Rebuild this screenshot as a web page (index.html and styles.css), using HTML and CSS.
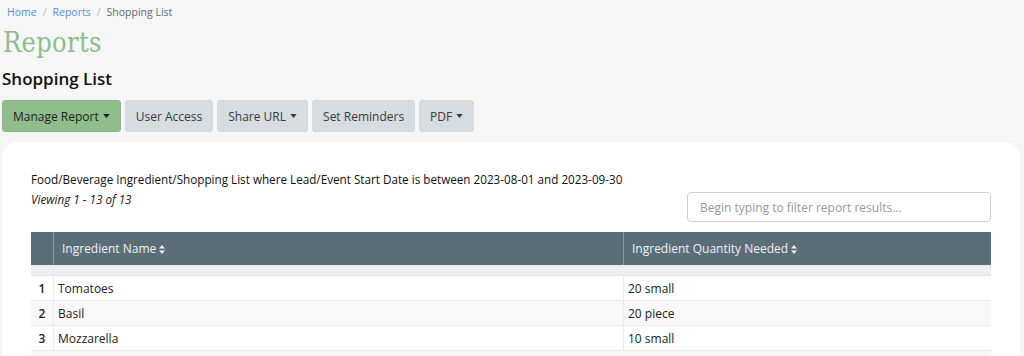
FILE: index.html
```html
<!DOCTYPE html>
<html>
<head>
<meta charset="utf-8">
<link rel="stylesheet" href="styles.css">
</head>
<body>
<nav class="crumbs">
  <a href="#">Home</a><span class="sep">/</span><a href="#">Reports</a><span class="sep">/</span><span class="cur">Shopping List</span>
</nav>
<h1 class="title">Reports</h1>
<h2 class="subtitle">Shopping List</h2>
<div class="toolbar">
  <button class="btn btn-green">Manage Report <svg class="caret" viewBox="0 0 8 5"><path d="M0 0h8L4 5z"/></svg></button>
  <button class="btn">User Access</button>
  <button class="btn">Share URL <svg class="caret" viewBox="0 0 8 5"><path d="M0 0h8L4 5z"/></svg></button>
  <button class="btn">Set Reminders</button>
  <button class="btn">PDF <svg class="caret" viewBox="0 0 8 5"><path d="M0 0h8L4 5z"/></svg></button>
</div>
<section class="card">
  <div class="card-top">
    <div class="desc">
      <div class="desc-title">Food/Beverage Ingredient/Shopping List where Lead/Event Start Date is between 2023-08-01 and 2023-09-30</div>
      <div class="desc-count">Viewing 1 - 13 of 13</div>
    </div>
    <input class="filter" type="text" placeholder="Begin typing to filter report results...">
  </div>
  <table class="report">
    <thead>
      <tr>
        <th class="num"></th>
        <th class="c-name">Ingredient Name <svg class="sort" viewBox="0 0 6 9"><path d="M0 3.6L3 0l3 3.6zM0 5.4h6L3 9z"/></svg></th>
        <th>Ingredient Quantity Needed <svg class="sort" viewBox="0 0 6 9"><path d="M0 3.6L3 0l3 3.6zM0 5.4h6L3 9z"/></svg></th>
      </tr>
    </thead>
    <tbody>
      <tr class="band"><td></td><td></td><td></td></tr>
      <tr><td class="num">1</td><td>Tomatoes</td><td>20 small</td></tr>
      <tr class="alt"><td class="num">2</td><td>Basil</td><td>20 piece</td></tr>
      <tr><td class="num">3</td><td>Mozzarella</td><td>10 small</td></tr>
    </tbody>
  </table>
  <div class="more-row"></div>
</section>
</body>
</html>
```
FILE: styles.css
```css
html, body {
  margin: 0;
  padding: 0;
  background: #f6f6f6;
  overflow: hidden;
}
body {
  font-family: "Open Sans", "Noto Sans", sans-serif;
  color: #222;
  padding: 0 4px 0 2px;
}
.crumbs {
  font-size: 10.5px;
  line-height: 15px;
  padding: 5px 0 0 5px;
  color: #666;
}
.crumbs a {
  color: #5b8fd6;
  text-decoration: none;
}
.crumbs .sep {
  color: #bbb;
  padding: 0 6px;
}
.title {
  font-family: "DejaVu Serif", serif;
  font-stretch: condensed;
  font-weight: normal;
  font-size: 27px;
  line-height: 34px;
  color: #8fbc8c;
  margin: 6px 0 0 1px;
  letter-spacing: 0.3px;
}
.subtitle {
  font-size: 17px;
  font-weight: 600;
  line-height: 24px;
  margin: 7px 0 0 0;
  color: #111;
}
.toolbar {
  display: flex;
  gap: 4px;
  margin-top: 9px;
}
.btn {
  font-family: "Open Sans", sans-serif;
  font-size: 12px;
  font-weight: 500;
  height: 32px;
  padding: 0 10px;
  border: 1px solid #d3d9dd;
  background: #d6dce0;
  color: #3a3a3a;
  border-radius: 3px;
  display: flex;
  align-items: center;
  gap: 4px;
}
.btn-green {
  background: #8fbd8c;
  border-color: #89b886;
  color: #1e1e1e;
}
.caret {
  width: 7px;
  height: 4px;
  fill: currentColor;
}
.card {
  margin-top: 10px;
  background: #fff;
  border-radius: 15px 15px 0 0;
  padding: 27px 29px 0 29px;
  height: 300px;
}
.card-top {
  display: flex;
  justify-content: space-between;
  align-items: flex-end;
}
.desc-title {
  font-size: 11.7px;
  font-weight: 500;
  line-height: 20px;
  color: #111;
}
.desc-count {
  font-size: 11.7px;
  font-style: italic;
  font-weight: 500;
  line-height: 20px;
  color: #222;
  margin-bottom: 13px;
}
.filter {
  width: 304px;
  height: 30px;
  box-sizing: border-box;
  border: 1px solid #ccd0d3;
  border-radius: 4px;
  padding: 0 12px;
  font-family: "Open Sans", sans-serif;
  font-size: 12px;
  color: #333;
}
.filter::placeholder {
  color: #999;
}
.report {
  margin-top: 10px;
  width: 100%;
  border-collapse: collapse;
  font-size: 12px;
}
.report th {
  background: #5a6e78;
  color: #eef1f3;
  font-weight: 500;
  text-align: left;
  height: 33px;
  padding: 0 8px;
  border-left: 1px solid #8c9ba3;
}
.report th.num {
  width: 6px;
  border-left: none;
}
.report th.c-name {
  width: 553px;
}
.sort {
  width: 6px;
  height: 9px;
  fill: #eef1f3;
  vertical-align: -1px;
}
.report td {
  height: 24px;
  padding: 0 4px;
  border-bottom: 1px solid #e9ebec;
  border-left: 1px solid #e9ebec;
  color: #222;
}
.report td:first-child {
  border-left: none;
}
.report td.num {
  text-align: center;
  font-weight: 600;
  padding: 0 2px;
}
.report tr.band td {
  height: 10px;
  padding: 0;
  background: #eceef0;
  border-left: none;
  border-bottom: 1px dotted #dde0e2;
}
.report tr.alt td {
  background: #f8f8f8;
}
.more-row {
  height: 25px;
  background: #f8f8f8;
}
```
